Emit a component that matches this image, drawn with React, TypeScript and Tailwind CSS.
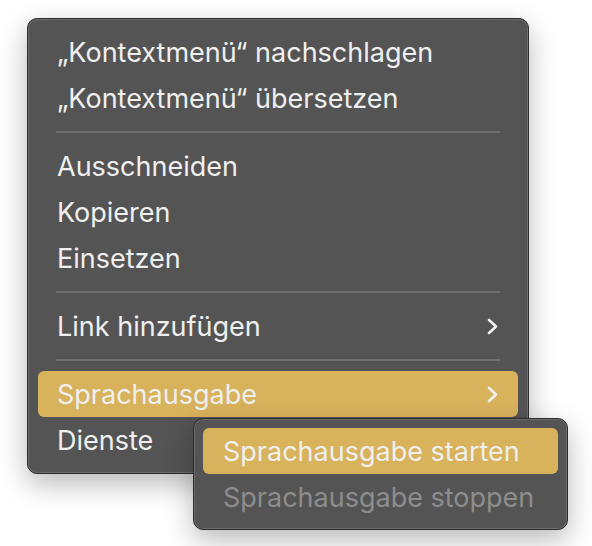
import React from 'react';

type Item =
  | { kind: 'item'; label: string; submenu?: boolean; active?: boolean }
  | { kind: 'sep' };

const MAIN: Item[] = [
  { kind: 'item', label: '„Kontextmenü“ nachschlagen' },
  { kind: 'item', label: '„Kontextmenü“ übersetzen' },
  { kind: 'sep' },
  { kind: 'item', label: 'Ausschneiden' },
  { kind: 'item', label: 'Kopieren' },
  { kind: 'item', label: 'Einsetzen' },
  { kind: 'sep' },
  { kind: 'item', label: 'Link hinzufügen', submenu: true },
  { kind: 'sep' },
  { kind: 'item', label: 'Sprachausgabe', submenu: true, active: true },
  { kind: 'item', label: 'Dienste' },
];

function Chevron() {
  return (
    <svg width="11" height="17" viewBox="0 0 11 17" fill="none" className="shrink-0">
      <polyline points="2,2 9,8.5 2,15" stroke="#f2f2f2" strokeWidth="2.6" strokeLinecap="round" strokeLinejoin="round" />
    </svg>
  );
}

const panel =
  'bg-[#545454] rounded-[10px] border border-[#2c2c2c] shadow-[inset_0_0_0_1px_rgba(255,255,255,0.14),0_10px_28px_rgba(0,0,0,0.28)]';

export default function App() {
  return (
    <div className="w-[592px] h-[546px] bg-white relative overflow-hidden font-['Inter','Liberation_Sans',sans-serif] text-[27px] text-[#efefef]">
      {/* Main menu */}
      <div className={`absolute left-[27px] top-[18px] w-[502px] py-[10px] px-[10px] ${panel}`}>
        {MAIN.map((it, i) =>
          it.kind === 'sep' ? (
            <div key={i} className="px-[18px] py-[10px]">
              <div className="h-[2px] bg-[#6f6f6f]" />
            </div>
          ) : (
            <div
              key={i}
              className={`h-[46px] flex items-center justify-between pl-[19px] pr-[20px] rounded-[6px] ${
                it.active ? 'bg-[#d9b25c]' : ''
              }`}
            >
              <span className="leading-none">{it.label}</span>
              {it.submenu && <Chevron />}
            </div>
          )
        )}
      </div>

      {/* Submenu */}
      <div className={`absolute left-[193px] top-[418px] w-[375px] py-[9px] px-[9px] ${panel}`}>
        <div className="h-[46px] flex items-center pl-[20px] rounded-[6px] bg-[#d9b25c]">
          <span className="leading-none">Sprachausgabe starten</span>
        </div>
        <div className="h-[46px] flex items-center pl-[20px] text-[#8d8d8d]">
          <span className="leading-none">Sprachausgabe stoppen</span>
        </div>
      </div>
    </div>
  );
}
